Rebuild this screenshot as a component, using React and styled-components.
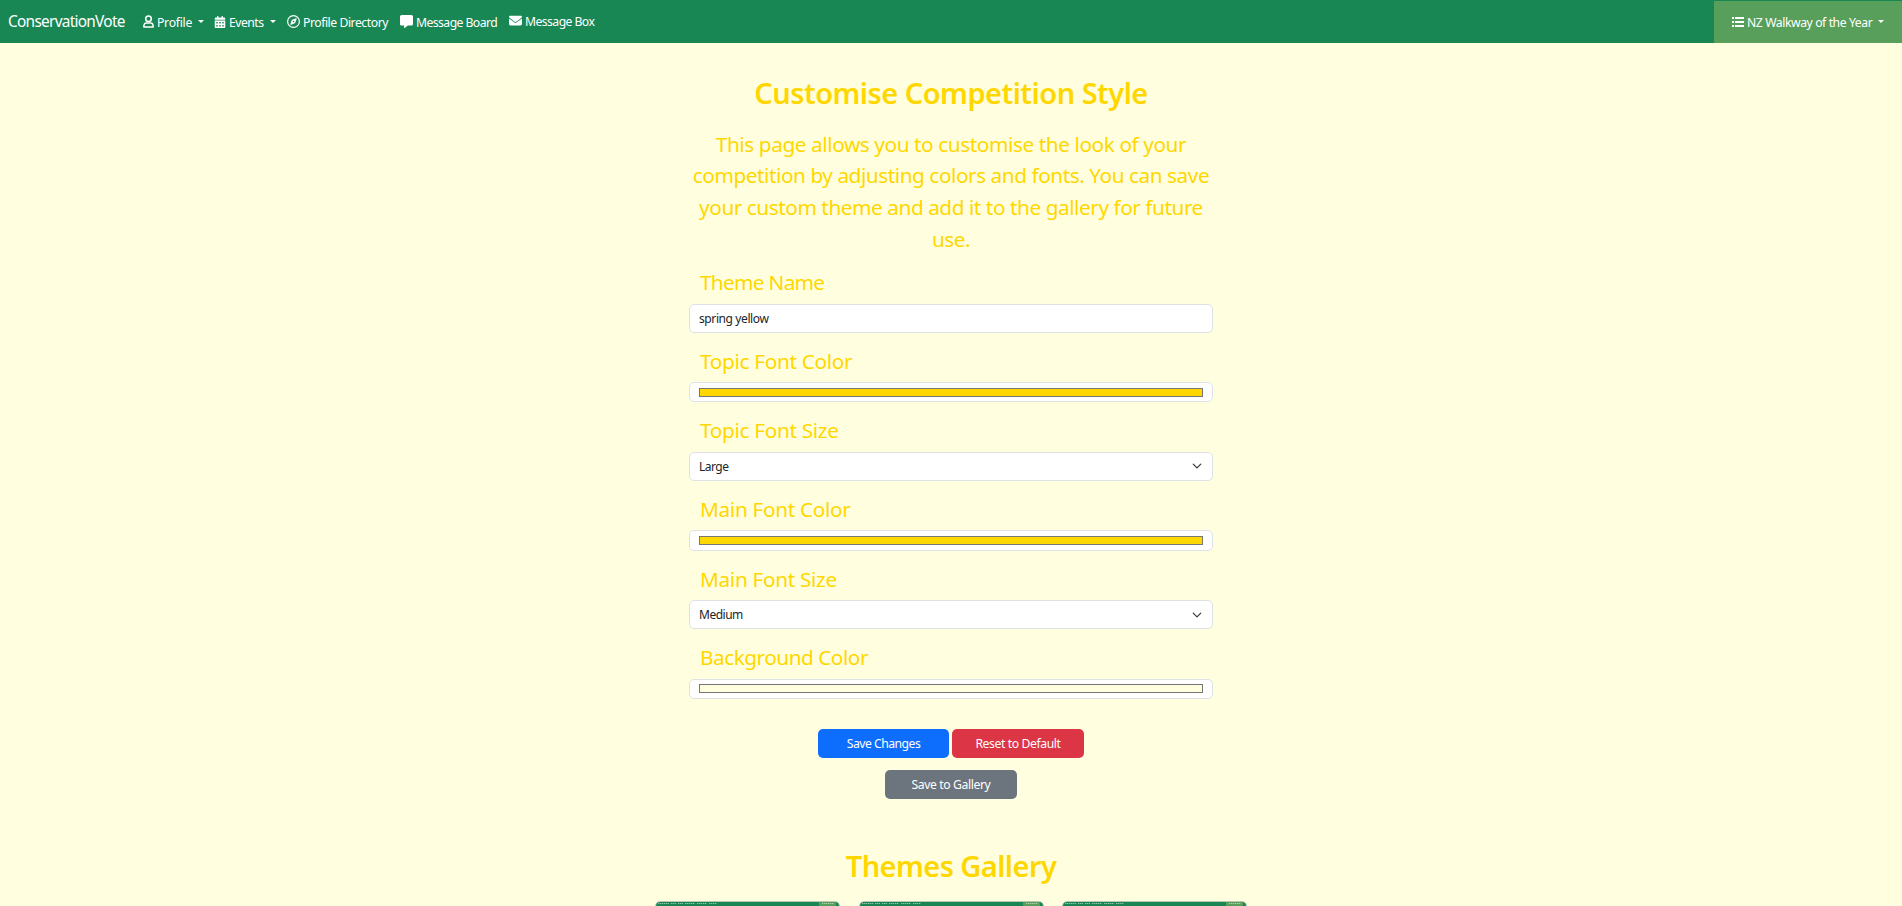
import React from "react";
import styled, { createGlobalStyle } from "styled-components";
import { FaCalendarDays, FaRegCompass, FaMessage, FaEnvelope } from "react-icons/fa6";

const GlobalStyle = createGlobalStyle`
  *, *::before, *::after { box-sizing: border-box; }
  html, body { margin: 0; padding: 0; }
  body {
    font-family: "Segoe UI", "Noto Sans", "Open Sans", sans-serif;
    font-size: 12px;
    background: #ffffe0;
    overflow: hidden;
  }
`;

const Page = styled.div`
  height: 906px;
  overflow: hidden;
  background: #ffffe0;
  color: #ffd700;
`;

const Navbar = styled.nav`
  display: flex;
  align-items: stretch;
  height: 43px;
  padding: 0 0 0 8px;
  background: #198754;
  color: #fff;
`;

const Brand = styled.span`
  width: 135px;
  font-size: 15.4px;
  line-height: 43px;
  letter-spacing: ${(p) => p.$ls}px;
  white-space: nowrap;
`;

const NavItem = styled.a`
  display: flex;
  align-items: center;
  width: ${(p) => p.$w}px;
  padding-top: ${(p) => p.$drop ?? 2}px;
  gap: 3px;
  font-size: 12.2px;
  letter-spacing: ${(p) => p.$ls}px;
  white-space: nowrap;

  svg { flex: none; margin-bottom: 2px; }
`;

const Caret = styled.span`
  margin-left: 3px;
  margin-bottom: 3px;
  border-top: 3px solid currentColor;
  border-left: 3px solid transparent;
  border-right: 3px solid transparent;
`;

const Competition = styled(NavItem)`
  margin: 1px 0 0 auto;
  padding-top: 1px;
  padding-left: 18px;
  background: #579f5a;
`;

const Main = styled.main`
  display: flex;
  flex-direction: column;
  align-items: center;
`;

const Heading = styled.h2`
  margin: ${(p) => p.$top}px 0 0;
  font-size: 29px;
  font-weight: 600;
  line-height: 36px;
  letter-spacing: ${(p) => p.$ls}px;
  white-space: nowrap;
`;

const Lead = styled.p`
  width: 540px;
  margin: 17.6px 0 0;
  font-size: 20.8px;
  line-height: 31.8px;
  text-align: center;
`;

const LeadLine = styled.span`
  display: block;
  white-space: nowrap;
  letter-spacing: ${(p) => p.$ls}px;
`;

const Form = styled.form`
  display: flex;
  flex-direction: column;
  width: 524px;
  margin-top: -1.6px;
`;

const Label = styled.label`
  height: 49.6px;
  padding: 12px 0 0 11px;
  font-size: 20.8px;
  line-height: 32px;
  letter-spacing: ${(p) => p.$ls}px;
`;

const Control = styled.div`
  display: flex;
  align-items: center;
  justify-content: space-between;
  height: ${(p) => (p.$swatch ? 20.2 : 28.8)}px;
  padding: 0 9px;
  border: 1px solid #dee2e6;
  border-radius: 5px;
  background: #fff;
  color: #212529;
  font-size: 12px;
  letter-spacing: ${(p) => p.$ls ?? 0}px;

  svg { margin-right: 1px; }
`;

const Swatch = styled.span`
  flex: 1;
  height: 9px;
  border: 1px solid #767676;
  background: ${(p) => p.$color};
`;

const Actions = styled.div`
  display: flex;
  justify-content: center;
  gap: 3px;
  margin-top: ${(p) => p.$top}px;
`;

const tones = { primary: "#0d6efd", danger: "#dc3545", secondary: "#6c757d" };

const Button = styled.button`
  width: ${(p) => p.$w}px;
  height: 29px;
  padding: 1px 0 0;
  border: 0;
  border-radius: 5px;
  background: ${(p) => tones[p.$tone]};
  color: #fff;
  font: inherit;
  font-size: 12.2px;
  letter-spacing: ${(p) => p.$ls}px;
`;

const Gallery = styled.div`
  display: flex;
  gap: 18.4px;
  margin-top: 17px;
`;

const Card = styled.div`
  width: 185px;
  height: 150px;
  overflow: hidden;
  border: 1px solid #b9c6b4;
  border-radius: 5px;
  background: #ffffe0;

  svg { display: block; }
`;

const UserIcon = () => (
  <svg width="11" height="13" viewBox="0 0 11 13" fill="none" stroke="currentColor" strokeWidth="1.5" strokeLinejoin="round">
    <circle cx="5.5" cy="3.7" r="2.8" />
    <path d="M3.3 8h4.4c1.6 0 2.5 1.3 2.5 4H.8c0-2.700.9-4 2.500-4z" />
  </svg>
);

const ListIcon = () => (
  <svg width="12" height="11" viewBox="0 0 12 11" fill="currentColor">
    <path d="M0 1h2v2H0zM3 1h9v2H3zM0 5h2v2H0zM3 5h9v2H3zM0 9h2v2H0zM3 9h9v2H3z" />
  </svg>
);

const Chevron = () => (
  <svg width="10" height="10" viewBox="0 0 16 16" fill="none" stroke="#343a40" strokeWidth="2" strokeLinecap="round" strokeLinejoin="round">
    <path d="m2 5 6 6 6-6" />
  </svg>
);

const Thumbnail = () => (
  <Card>
    <svg width="183" height="148" viewBox="0 0 183 148">
      <rect width="183" height="4" fill="#198754" />
      <rect x="163" width="17" height="4" fill="#579f5a" />
      <path d="M2 1.5h11M15 1.5h5M22 1.5h5M29 1.5h10M41 1.5h10M53 1.5h8M166 1.5h12" stroke="#fff" strokeOpacity=".5" strokeWidth="1" strokeDasharray="1.4 .6" />
    </svg>
  </Card>
);

const GOLD = "#ffd700";

export default function App() {
  return (
    <Page>
      <GlobalStyle />
      <Navbar>
        <Brand $ls={-0.72}>ConservationVote</Brand>
        <NavItem $w={71} $ls={-0.25}><UserIcon />Profile<Caret /></NavItem>
        <NavItem $w={73} $ls={-0.5}><FaCalendarDays size={12} />Events<Caret /></NavItem>
        <NavItem $w={113} $ls={-0.45}><FaRegCompass size={13} />Profile Directory</NavItem>
        <NavItem $w={109} $ls={-0.56}><FaMessage size={13} />Message Board</NavItem>
        <NavItem $w={100} $ls={-0.56} $drop={0}><FaEnvelope size={13} />Message Box</NavItem>
        <Competition $w={188} $ls={-0.42}><ListIcon />NZ Walkway of the Year<Caret /></Competition>
      </Navbar>
      <Main>
        <Heading $top={32} $ls={-0.53}>Customise Competition Style</Heading>
        <Lead>
          <LeadLine $ls={-0.43}>This page allows you to customise the look of your</LeadLine>
          <LeadLine $ls={-0.46}>competition by adjusting colors and fonts. You can save</LeadLine>
          <LeadLine $ls={-0.46}>your custom theme and add it to the gallery for future</LeadLine>
          <LeadLine $ls={-0.5}>use.</LeadLine>
        </Lead>
        <Form>
          <Label $ls={-0.7}>Theme Name</Label>
          <Control $ls={-0.4}>spring yellow</Control>
          <Label $ls={-0.34}>Topic Font Color</Label>
          <Control $swatch><Swatch $color={GOLD} /></Control>
          <Label $ls={-0.34}>Topic Font Size</Label>
          <Control $ls={-0.5}>Large<Chevron /></Control>
          <Label $ls={-0.34}>Main Font Color</Label>
          <Control $swatch><Swatch $color={GOLD} /></Control>
          <Label $ls={-0.34}>Main Font Size</Label>
          <Control $ls={-0.5}>Medium<Chevron /></Control>
          <Label $ls={-0.5}>Background Color</Label>
          <Control $swatch><Swatch $color="#ffffe0" /></Control>
        </Form>
        <Actions $top={30.2}>
          <Button type="button" $tone="primary" $w={131} $ls={-0.5}>Save Changes</Button>
          <Button type="button" $tone="danger" $w={132} $ls={-0.4}>Reset to Default</Button>
        </Actions>
        <Actions $top={12}>
          <Button type="button" $tone="secondary" $w={132} $ls={-0.4}>Save to Gallery</Button>
        </Actions>
        <Heading $top={49} $ls={-0.57}>Themes Gallery</Heading>
        <Gallery>
          <Thumbnail />
          <Thumbnail />
          <Thumbnail />
        </Gallery>
      </Main>
    </Page>
  );
}
